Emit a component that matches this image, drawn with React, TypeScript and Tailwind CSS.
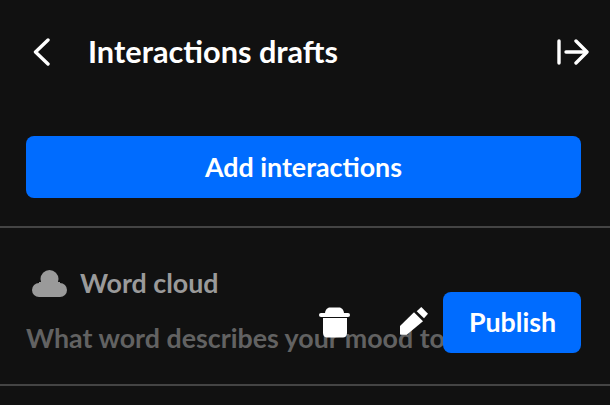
export default function App() {
  return (
    <div className="h-[405px] w-[610px] overflow-hidden bg-[#111111] font-['Lato',sans-serif] text-white antialiased">
      <header className="flex h-[104px] items-center justify-between pl-[33px] pr-[21px]">
        <div className="flex items-center">
          <svg width="17" height="28" viewBox="0 0 17 28" fill="none" stroke="currentColor" strokeWidth="3.4" strokeLinecap="round" strokeLinejoin="round">
            <path d="M15 2 L2.5 14 L15 26" />
          </svg>
          <h1 className="ml-[38px] text-[30.7px] font-bold leading-none">Interactions drafts</h1>
        </div>
        <svg width="32" height="28" viewBox="0 0 32 28" fill="none" stroke="currentColor" strokeWidth="3.4" strokeLinecap="round" strokeLinejoin="round">
          <path d="M2 3 V25" />
          <path d="M9 14 H29" />
          <path d="M19 3 L30 14 L19 25" />
        </svg>
      </header>

      <div className="mt-[32px] px-[26px]">
        <button className="flex h-[62px] w-[555px] items-center justify-center rounded-lg bg-[#006cff] text-[26.8px] font-bold">
          Add interactions
        </button>
      </div>

      <div className="mt-[28px] h-[2px] bg-[#444444]" />

      <div className="relative h-[156px] pl-[26px]">
        <div className="flex items-center pl-[6px] pt-[39px] text-[#9a9a9a]">
          <svg width="35" height="27" viewBox="0 0 35 27" fill="currentColor">
            <circle cx="17.5" cy="9" r="9" />
            <circle cx="7" cy="20" r="7" />
            <circle cx="28" cy="20" r="7" />
            <rect x="7" y="12" width="21" height="15" />
            <rect x="9" y="9" width="17" height="6" />
          </svg>
          <span className="ml-[13px] text-[26.8px] font-bold leading-[32px]">Word cloud</span>
        </div>
        {/* the question runs under the actions and is cut off at the button */}
        <p className="mt-[23px] w-[417px] overflow-hidden whitespace-nowrap text-[26.8px] font-bold leading-[32px] text-[#626262]">
          What word describes your mood today?
        </p>

        <div className="absolute right-[29px] top-[64px] flex items-center">
          <svg width="32" height="31" viewBox="0 0 32 31" fill="white" className="mr-[49px]">
            <path d="M6 6 C6.500 2 9 0.500 11 0.500 H20 C22 0.500 24.500 2 25 6 Z" />
            <rect x="0" y="6" width="31" height="4" rx="2" />
            <path d="M4 11 H28 V26 C28 29 26 30.500 24 30.500 H8 C6 30.500 4 29 4 26 Z" />
          </svg>
          <svg width="28" height="28" viewBox="0 0 28 28" fill="white" className="mr-[15px] -mt-[3px]">
            <path d="M0 19 L14 5.300 L23 14.300 L6.700 27.700 L1 27.700 C0.400 27.700 0 27.300 0 26.700 Z" />
            <path d="M16.700 4.300 L21.300 0 L28 6.700 L24 11.300 Z" />
          </svg>
          <button className="flex h-[61px] w-[138px] items-center justify-center rounded-lg bg-[#006cff] pl-px text-[26.8px] font-bold text-white">
            Publish
          </button>
        </div>
      </div>

      <div className="h-[2px] bg-[#444444]" />
    </div>
  )
}
